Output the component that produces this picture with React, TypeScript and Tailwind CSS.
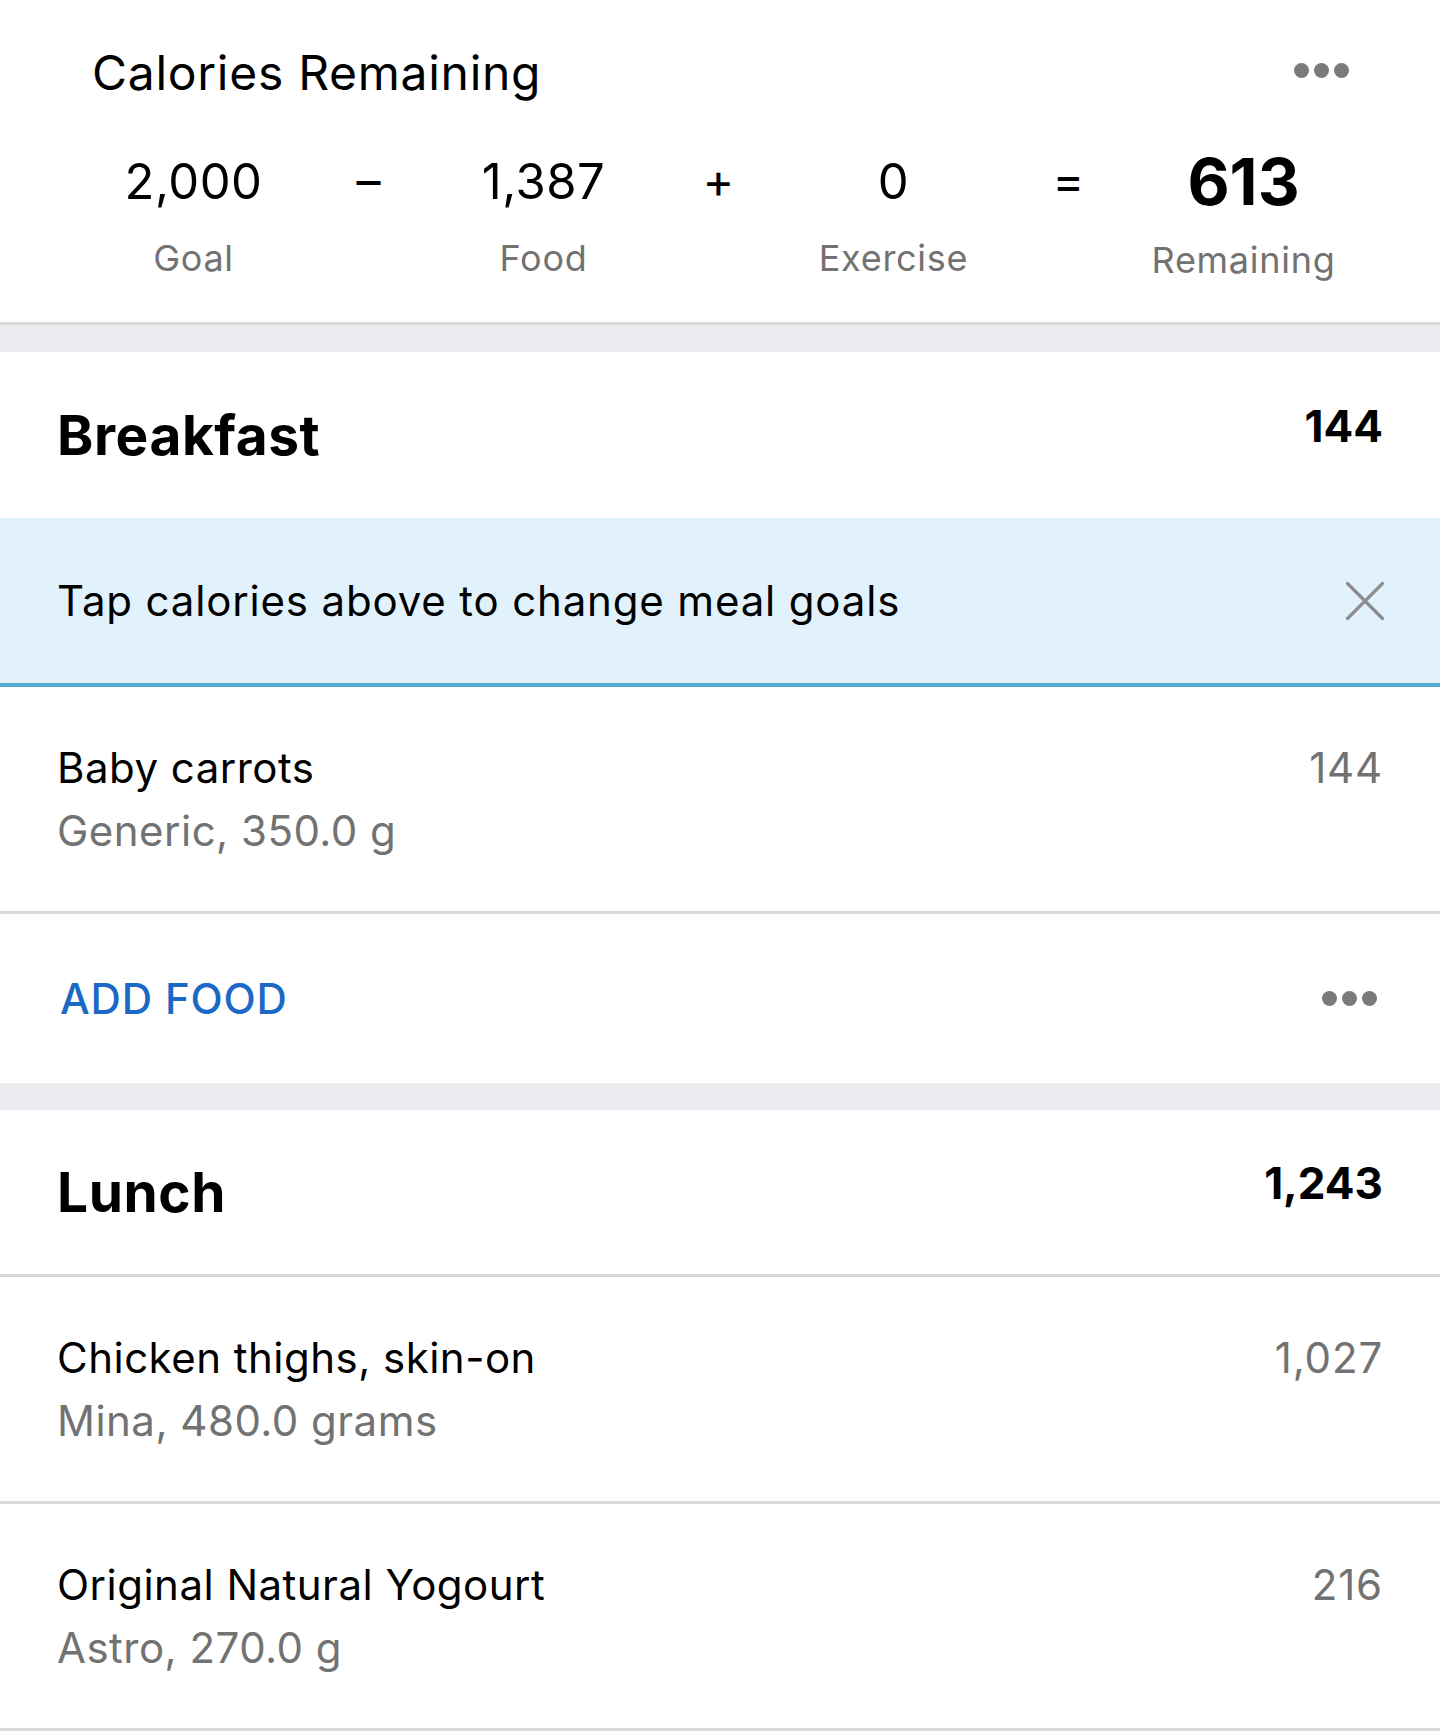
import { X } from "lucide-react";

const foods = {
  breakfast: [{ name: "Baby carrots", detail: "Generic, 350.0 g", kcal: "144" }],
  lunch: [
    { name: "Chicken thighs, skin-on", detail: "Mina, 480.0 grams", kcal: "1,027" },
    { name: "Original Natural Yogourt", detail: "Astro, 270.0 g", kcal: "216" },
  ],
};

function Dots({ className = "" }: { className?: string }) {
  return (
    <div className={`flex items-center gap-[5px] ${className}`}>
      <span className="w-[15px] h-[15px] rounded-full bg-[#7a7a7a]" />
      <span className="w-[15px] h-[15px] rounded-full bg-[#7a7a7a]" />
      <span className="w-[15px] h-[15px] rounded-full bg-[#7a7a7a]" />
    </div>
  );
}

function Stat({ value, label, bold = false }: { value: string; label: string; bold?: boolean }) {
  return (
    <div className="flex flex-col items-center">
      <div
        className={`h-[70px] flex items-center leading-none text-black ${
          bold ? "text-[65px] font-bold mb-[2px]" : "text-[49px] tracking-[0.01em]"
        }`}
      >
        {value}
      </div>
      <div className="h-[84px] flex items-center leading-none text-[36px] tracking-[0.02em] text-[#727272]">
        {label}
      </div>
    </div>
  );
}

function Op({ sign }: { sign: string }) {
  return (
    <div className="h-[70px] flex items-center justify-center leading-none text-[48px] text-black">
      {sign}
    </div>
  );
}

function FoodRow({ name, detail, kcal }: { name: string; detail: string; kcal: string }) {
  return (
    <div className="h-[227px] border-b-[3px] border-[#d9d9dc] px-[57px] pt-[60px] flex justify-between items-start">
      <div className="flex flex-col gap-[21px] tracking-[0.03em]">
        <div className="text-[42px] leading-none text-black">{name}</div>
        <div className="text-[42px] leading-none text-[#727272]">{detail}</div>
      </div>
      <div className="text-[42px] leading-none tracking-[0.02em] text-[#727272]">{kcal}</div>
    </div>
  );
}

function MealHeader({ title, kcal, divider = false }: { title: string; kcal: string; divider?: boolean }) {
  return (
    <div
      className={`px-[57px] flex items-center justify-between ${
        divider ? "h-[167px] border-b-[3px] border-[#d9d9dc]" : "h-[166px]"
      }`}
    >
      <h2 className="text-[55px] font-bold leading-none tracking-[0.01em] text-black">{title}</h2>
      <span className="text-[44px] font-bold leading-none text-black mb-[18px]">{kcal}</span>
    </div>
  );
}

export default function App() {
  return (
    <div
      className="w-[1440px] bg-white"
      style={{ fontFamily: "Inter, 'Noto Sans', sans-serif" }}
    >
      {/* Calories summary */}
      <section className="h-[322px]">
        <div className="h-[146px] flex items-center justify-between pl-[92px] pr-[91px]">
          <h1 className="text-[48px] leading-none tracking-[0.015em] text-black">Calories Remaining</h1>
          <Dots className="mb-[6px]" />
        </div>
        <div className="ml-[106px] w-[1225px] grid grid-cols-7">
          <Stat value="2,000" label="Goal" />
          <Op sign="–" />
          <Stat value="1,387" label="Food" />
          <Op sign="+" />
          <Stat value="0" label="Exercise" />
          <Op sign="=" />
          <Stat value="613" label="Remaining" bold />
        </div>
      </section>
      <div className="h-[30px] border-t-[3px] border-[#d9d9dc] bg-[#ebebef]" />

      {/* Breakfast */}
      <MealHeader title="Breakfast" kcal="144" />
      <div className="h-[169px] bg-[#e2f2fc] border-b-[4px] border-[#58acd2] px-[57px] flex items-center justify-between">
        <span className="text-[42px] leading-none tracking-[0.02em] text-black">
          Tap calories above to change meal goals
        </span>
        <X className="w-[70px] h-[70px] text-[#8e8e8e] -mr-[17px]" strokeWidth={1.1} />
      </div>
      {foods.breakfast.map((f) => (
        <FoodRow key={f.name} {...f} />
      ))}
      <div className="h-[169px] px-[57px] flex items-center justify-between">
        <span className="text-[42px] font-medium leading-none tracking-[0.02em] text-[#1b68c6] ml-[3px]">
          ADD FOOD
        </span>
        <Dots className="mr-[6px]" />
      </div>
      <div className="h-[27px] bg-[#ebebef]" />

      {/* Lunch */}
      <MealHeader title="Lunch" kcal="1,243" divider />
      {foods.lunch.map((f) => (
        <FoodRow key={f.name} {...f} />
      ))}
      <div className="h-[1px]" />
    </div>
  );
}
